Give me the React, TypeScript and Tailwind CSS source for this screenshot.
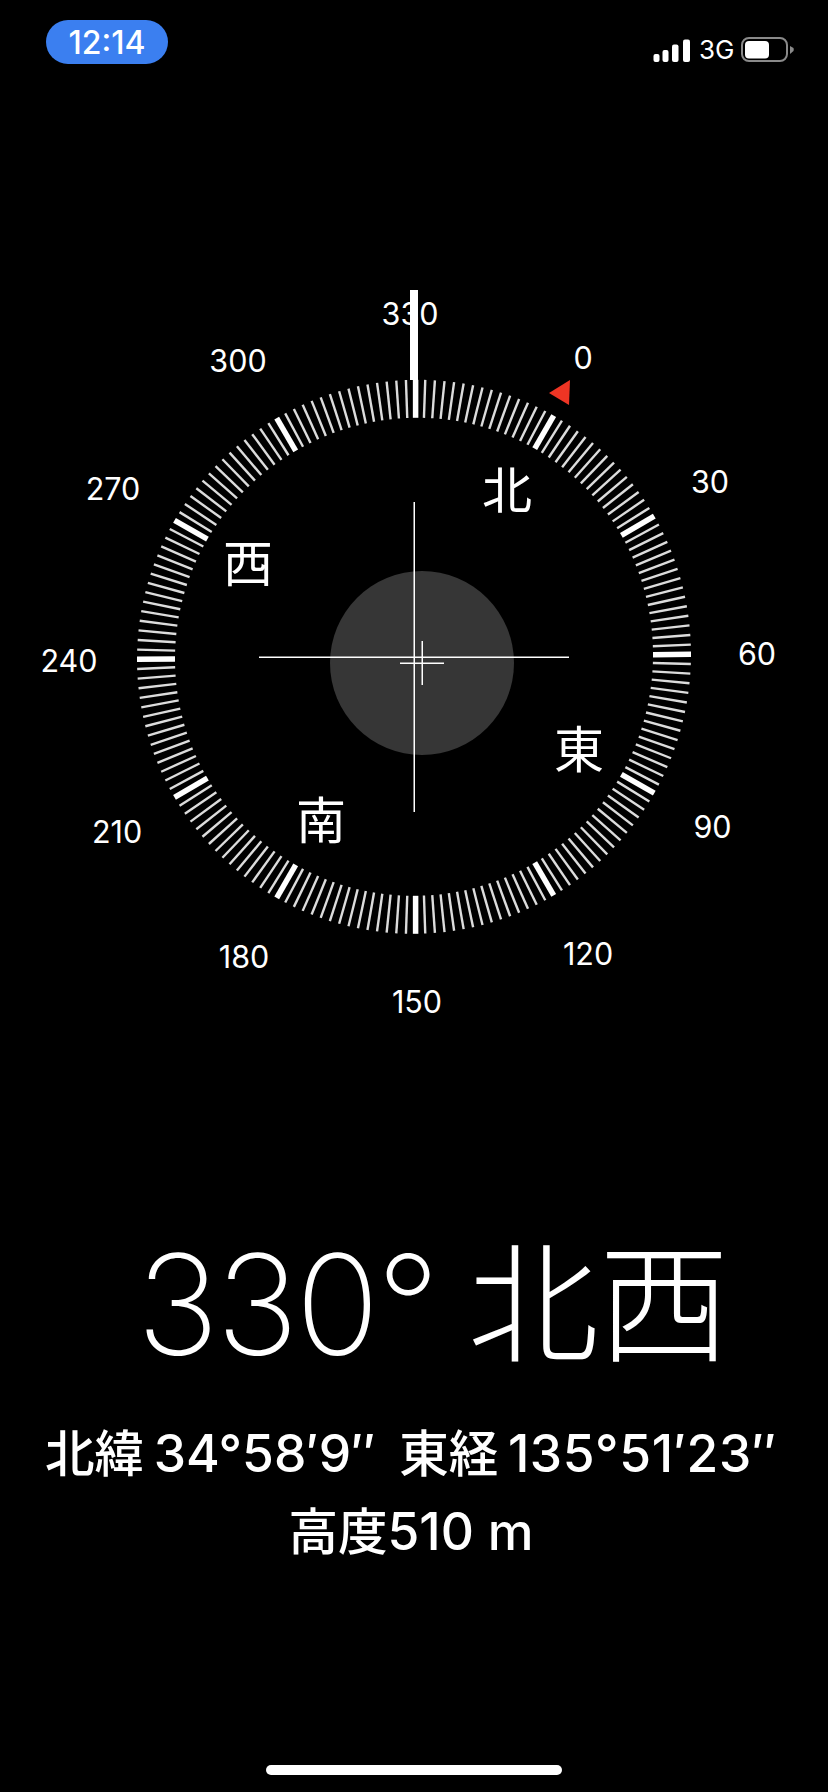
const SANS = '"Inter", "Noto Sans CJK JP", sans-serif';

const CX = 414;
const CY = 656.8;

const point = (deg: number, r: number) => {
  const t = (deg * Math.PI) / 180;
  const s = Math.sin(t);
  const c = Math.cos(t);
  return {
    x: CX + r * s + 1.6 * c * c,
    y: CY - r * c - 0.009 * r * s,
  };
};

const ticks = Array.from({ length: 180 }, (_, i) => {
  const deg = i * 2;
  const a = point(deg, 239);
  const b = point(deg, 277);
  return { deg, a, b, major: deg % 30 === 0 };
});

const numbers = [
  { t: '330', x: 410, y: 313.5 },
  { t: '0', x: 583, y: 358 },
  { t: '30', x: 710, y: 482 },
  { t: '60', x: 757, y: 653.5 },
  { t: '90', x: 712.5, y: 826.5 },
  { t: '120', x: 588, y: 953.5 },
  { t: '150', x: 417, y: 1001.5 },
  { t: '180', x: 244, y: 957 },
  { t: '210', x: 117, y: 832 },
  { t: '240', x: 69, y: 661 },
  { t: '270', x: 113, y: 489 },
  { t: '300', x: 238, y: 361 },
];

const cardinals = [
  { t: '北', x: 507, y: 491 },
  { t: '西', x: 248, y: 564 },
  { t: '東', x: 579, y: 750 },
  { t: '南', x: 321, y: 821 },
];

function Dial() {
  return (
    <div className="relative w-full h-[1100px]">
      <svg className="absolute inset-0" width="828" height="1100" viewBox="0 70 828 1100">
        <circle cx="422" cy="663" r="92" fill="#363636" />
        {ticks.map((k) => (
          <line
            key={k.deg}
            x1={k.a.x}
            y1={k.a.y}
            x2={k.b.x}
            y2={k.b.y}
            stroke={k.major ? '#ffffff' : '#dcdcdc'}
            strokeWidth={k.major ? 5.5 : 2.4}
          />
        ))}
        <rect x="410" y="290" width="8" height="90" fill="#ffffff" />
        <polygon points="570,380 569,405 549,393" fill="#ee3524" />
        <rect x="413.5" y="502" width="1.5" height="310" fill="#ffffff" />
        <rect x="259" y="656.5" width="310" height="1.5" fill="#ffffff" />
        <rect x="421.5" y="641" width="1.5" height="44" fill="#ffffff" />
        <rect x="400" y="662.5" width="44" height="1.5" fill="#ffffff" />
      </svg>
      {numbers.map((n) => (
        <span
          key={n.t}
          className="absolute -translate-x-1/2 -translate-y-1/2 text-[30.5px] leading-none text-white"
          style={{ left: n.x, top: n.y - 70 }}
        >
          {n.t}
        </span>
      ))}
      {cardinals.map((n) => (
        <span
          key={n.t}
          className="absolute -translate-x-1/2 -translate-y-1/2 text-[50px] leading-none text-white font-normal"
          style={{ left: n.x, top: n.y - 70 }}
        >
          {n.t}
        </span>
      ))}
    </div>
  );
}

export default function App() {
  return (
    <div
      className="w-[828px] h-[1792px] bg-black text-white flex flex-col overflow-hidden"
      style={{ fontFamily: SANS }}
    >
      <div className="h-[70px] flex justify-between shrink-0">
        <div className="ml-[46px] mt-[20px] w-[122px] h-[44px] rounded-[22px] bg-[#3b7ff0] flex items-center justify-center text-[32px] font-medium leading-none">
          <span className="mt-[1px]">12:14</span>
        </div>
        <div className="mr-[33px] mt-[37px] h-[26px] flex items-center gap-[8px]">
          <svg width="38" height="23" viewBox="0 0 38 23" className="mt-[1px] ml-[1px]">
            <rect x="0.5" y="15" width="6" height="8" rx="2" fill="#fff" />
            <rect x="9.5" y="11" width="6" height="12" rx="2" fill="#fff" />
            <rect x="19" y="5.5" width="6.5" height="17.5" rx="2" fill="#fff" />
            <rect x="30" y="0.5" width="7" height="22.5" rx="2" fill="#fff" />
          </svg>
          <span className="text-[26px] leading-none w-[34px]">3G</span>
          <svg width="54" height="26" viewBox="0 0 54 26">
            <rect x="1" y="1" width="45" height="23" rx="7" fill="none" stroke="#8a8a8a" strokeWidth="2" />
            <rect x="4" y="4" width="24" height="17.5" rx="4" fill="#fff" />
            <path d="M49 9 L52.5 11 Q53 12.5 52.5 14 L49 17 Z" fill="#8a8a8a" />
          </svg>
        </div>
      </div>
      <Dial />
      <div className="mt-[55px] pl-[38px] h-[160px] flex items-center justify-center leading-[160px] whitespace-nowrap">
        <span className="text-[139px] font-extralight tracking-[-3px]">330°</span>
        <span className="w-[31px]" />
        <span className="text-[131px] font-extralight">北西</span>
      </div>
      <div className="mt-[33px] pr-[6px] h-[70px] text-center text-[51.5px] leading-[70px] font-medium whitespace-nowrap [word-spacing:-4px]">
        <span className="text-[49.5px]">北緯</span> 34°58′9″&nbsp;&nbsp;
        <span className="text-[49.5px] ml-[4px]">東経</span> <span className="tracking-[0.6px]">135°51′23″</span>
      </div>
      <div className="mt-[8px] pr-[6px] h-[70px] text-center text-[51.5px] leading-[70px] font-medium whitespace-nowrap">
        <span className="text-[49.5px]">高度</span>510 m
      </div>
      <div className="mt-auto mb-[17px] self-center w-[296px] h-[10px] rounded-full bg-white" />
    </div>
  );
}
